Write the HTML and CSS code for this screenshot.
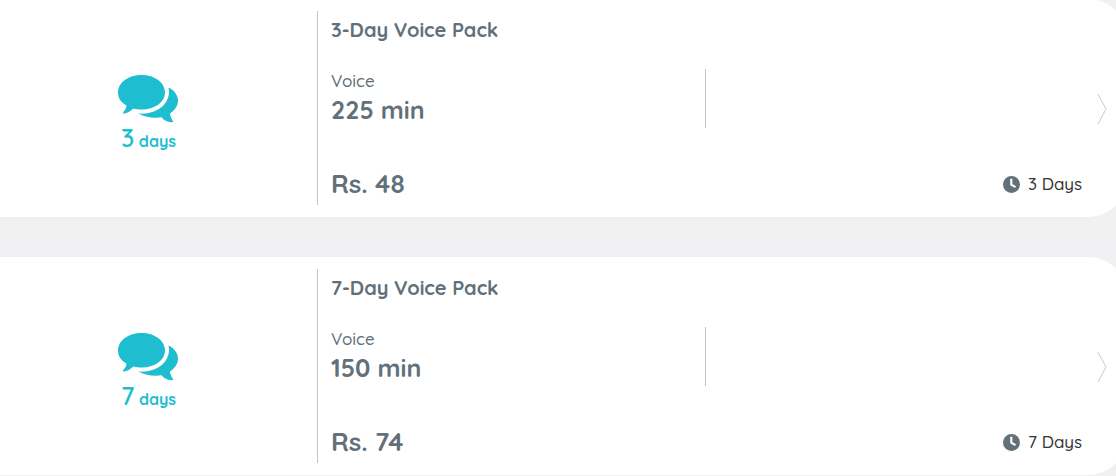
FILE: index.html
```html
<!DOCTYPE html>
<html lang="en">
<head>
<meta charset="utf-8">
<meta name="viewport" content="width=device-width, initial-scale=1">
<title>Voice Packs</title>
<link rel="stylesheet" href="styles.css">
</head>
<body>
<svg class="defs" aria-hidden="true">
  <symbol id="bubbles" viewBox="0 0 60 48">
    <path d="M23.500 0C36.500 0 47 7.500 47 17.500C47 27.500 36.500 34.500 23.500 34.500C20.500 34.500 18 34.200 15.500 33.500C12 36.500 9 38.500 5 38.500C4.300 37 8 35.500 8.500 30.500C3 27.500 0 23 0 17.500C0 7.500 10.500 0 23.500 0Z"/>
    <path d="M50.500 12.500C56 15 60 20 60 25.500C60 31 57 35 52 38.500C52.500 42.500 54 44.500 55.500 47C50.500 47.800 46 45.500 43.500 42.300C35 43.500 26 42 20.500 38.500C38 40 54 29 50.500 12.500Z"/>
  </symbol>
  <symbol id="clock" viewBox="0 0 16 16">
    <circle cx="8" cy="8" r="8"/>
    <path d="M7.800 2.500V8.200L11.800 10.500" fill="none" stroke="#fff" stroke-width="2"/>
  </symbol>
  <symbol id="chevron" viewBox="0 0 10 32">
    <path d="M1 1L9 16L1 31" fill="none" stroke="#c6c9cb" stroke-width="1"/>
  </symbol>
</svg>
<main class="packs">
  <article class="card">
    <div class="badge">
      <svg class="badge-icon" aria-hidden="true"><use href="#bubbles"/></svg>
      <p class="badge-text"><span class="badge-number">3</span> days</p>
    </div>
    <div class="details">
      <h2 class="title">3-Day Voice Pack</h2>
      <dl class="allowance">
        <dt class="label">Voice</dt>
        <dd class="amount">225 min</dd>
      </dl>
      <div class="summary">
        <span class="price">Rs. 48</span>
        <span class="validity"><svg class="clock" aria-hidden="true"><use href="#clock"/></svg>3 Days</span>
      </div>
    </div>
    <a class="more" href="#" aria-label="3-Day Voice Pack details"><svg class="chevron" aria-hidden="true"><use href="#chevron"/></svg></a>
  </article>
  <article class="card">
    <div class="badge">
      <svg class="badge-icon" aria-hidden="true"><use href="#bubbles"/></svg>
      <p class="badge-text"><span class="badge-number">7</span> days</p>
    </div>
    <div class="details">
      <h2 class="title">7-Day Voice Pack</h2>
      <dl class="allowance">
        <dt class="label">Voice</dt>
        <dd class="amount">150 min</dd>
      </dl>
      <div class="summary">
        <span class="price">Rs. 74</span>
        <span class="validity"><svg class="clock" aria-hidden="true"><use href="#clock"/></svg>7 Days</span>
      </div>
    </div>
    <a class="more" href="#" aria-label="7-Day Voice Pack details"><svg class="chevron" aria-hidden="true"><use href="#chevron"/></svg></a>
  </article>
</main>
</body>
</html>
```
FILE: styles.css
```css
* {
  box-sizing: border-box;
}

body {
  margin: 0;
  background: linear-gradient(#f1f1f1 235px, #f0f0f2 235px);
  color: #62707a;
  font-family: Quicksand, Lato, sans-serif;
}

.defs {
  display: none;
}

.packs {
  display: flex;
  flex-direction: column;
  gap: 40px;
  overflow: hidden;
}

.card {
  display: grid;
  grid-template-columns: 28.1% 1fr 46px;
  margin-right: -12px;
  padding: 12px 0;
  background: #fff;
  border-radius: 0 40px 40px 0;
}

.card:first-child {
  margin-top: -1px;
}

.badge {
  display: flex;
  flex-direction: column;
  align-items: center;
  justify-content: center;
  padding: 14px 20px 0 0;
  color: #1fbdd0;
}

.badge-icon {
  width: 60px;
  height: 48px;
  fill: currentColor;
}

.badge-text {
  margin: 0;
  font-size: 16px;
  font-weight: 700;
  line-height: 30px;
}

.badge-number {
  font-size: 25px;
  font-weight: 600;
}

.details {
  padding: 0 0 5px 13px;
  border-left: 1px solid #c3c7c9;
}

.title {
  margin: 0 0 20px;
  font-size: 20px;
  font-weight: 700;
  line-height: 38px;
}

.allowance {
  width: 50%;
  margin: 0 0 40px;
  padding-bottom: 2px;
  border-right: 1px solid #bfc4c7;
}

.label {
  font-size: 17px;
  font-weight: 500;
  line-height: 24px;
}

.amount {
  margin: 0;
  font-size: 25px;
  font-weight: 700;
  line-height: 33px;
}

.summary {
  display: flex;
  align-items: center;
  justify-content: space-between;
  line-height: 32px;
}

.price {
  font-size: 26px;
  font-weight: 700;
}

.validity {
  display: flex;
  align-items: center;
  gap: 8px;
  color: #333;
  font-size: 17px;
  font-weight: 500;
}

.clock {
  width: 17px;
  height: 17px;
  fill: #62707a;
}

.more {
  display: flex;
  align-items: center;
  padding: 2px 0 0 15px;
}

.chevron {
  width: 10px;
  height: 32px;
}
```
